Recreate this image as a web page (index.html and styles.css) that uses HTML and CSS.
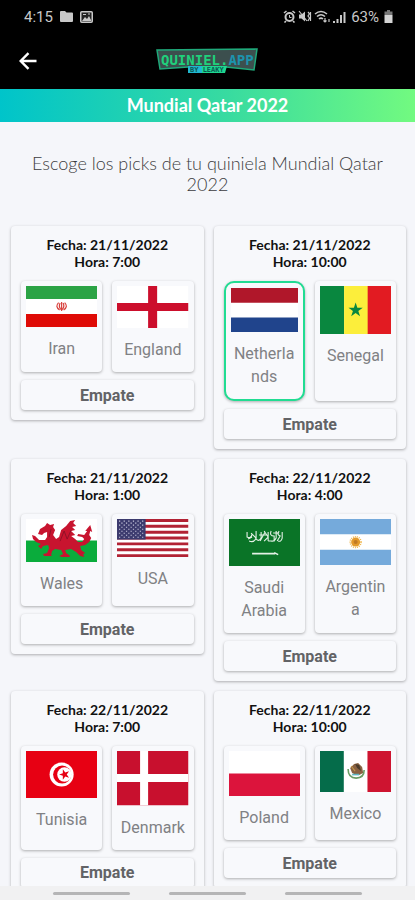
FILE: index.html
```html
<!DOCTYPE html>
<html lang="es">
<head>
<meta charset="utf-8">
<meta name="viewport" content="width=device-width, initial-scale=1">
<title>Mundial Qatar 2022</title>
<link rel="stylesheet" href="styles.css">
</head>
<body>
<div class="app">
  <div class="status">
    <div class="status-group">
      <span>4:15</span>
      <svg width="13" height="11" viewBox="0 0 13 11" fill="#c8c8c8"><path d="M1 0h4l1.500 1.500H12a1 1 0 0 1 1 1V10a1 1 0 0 1-1 1H1a1 1 0 0 1-1-1V1a1 1 0 0 1 1-1z"/></svg>
      <svg width="13" height="12" viewBox="0 0 13 12"><rect x=".75" y=".75" width="11.500" height="10.500" rx="1" fill="#222" stroke="#c8c8c8" stroke-width="1.500"/><path d="M2 10l3-4 2 2 2-3 2.500 5z" fill="#c8c8c8"/><path d="M3 3h3v1H3zM8 2.500h2v1H8z" fill="#c8c8c8"/></svg>
    </div>
    <div class="status-group tight">
      <svg width="13" height="13" viewBox="0 0 13 13" fill="none" stroke="#c8c8c8"><circle cx="6.500" cy="7" r="4" stroke-width="2"/><path d="M1 3l2.500-2M12 3L9.500 1M3 11l-1.500 1.500M10 11l1.500 1.500" stroke-width="1.600"/><path d="M6.500 5v2.500h2"/></svg>
      <svg width="14" height="13" viewBox="0 0 14 13" fill="#c8c8c8"><path d="M1 4.500h2.500L7 1.500v10L3.500 8.500H1z"/><path d="M1 1l8 10M10 2l1.500 1.800L10 6l1.500 2L10 11M12.500 2v9" stroke="#c8c8c8" fill="none" stroke-width="1.200"/></svg>
      <svg width="17" height="13" viewBox="0 0 17 13" fill="none" stroke="#c8c8c8" stroke-width="1.600"><path d="M1 4q6-5 12 0M3 6.500q4-3.500 8 0M5 9q2-1.800 4 0"/><path d="M11 8v4M9.500 10.500L11 12l1.500-1.500M15 12V9" stroke-width="1.200"/></svg>
      <svg width="13" height="12" viewBox="0 0 13 12" fill="#c8c8c8"><path d="M0 10h2v2H0zM3.500 8h2v4h-2zM7 4h2v8H7zM10.500 1h2v11h-2z"/></svg>
      <span class="battery">63%</span>
      <svg width="9" height="13" viewBox="0 0 9 13"><path d="M3 0h3v1.500h2.500V5h-8V1.500H3z" fill="#777"/><path d="M.5 5h8v8h-8z" fill="#d4d4d4"/></svg>
    </div>
  </div>

  <header class="topbar">
    <button class="back" aria-label="Atrás">
      <svg width="18" height="18" viewBox="0 0 18 18" fill="none" stroke="#fff" stroke-width="2.400"><path d="M17.500 9H2M9.500 1.200L1.700 9l7.800 7.800"/></svg>
    </button>
    <svg class="logo" width="102" height="26" viewBox="0 0 102 26" role="img" aria-label="Quiniel.app">
      <path d="M1 2L101 1L98 22L70 19H32L4 21Z" fill="#3c4f4e" stroke="#1fa97a" stroke-width="1.500"/>
      <text x="5" y="17" class="logo-name"><tspan fill="#1fd17c">QUINIEL.</tspan><tspan fill="#1c93ad">APP</tspan></text>
      <path d="M32 18H71L69 25H32Z" fill="#1ed690"/><path d="M32 18H46V25H32Z" fill="#20b7d0"/>
      <text x="34" y="24" class="logo-sub">BY LEAKY</text>
    </svg>
  </header>

  <h1 class="banner">Mundial Qatar 2022</h1>

  <main class="content">
    <p class="intro">Escoge los picks de tu quiniela Mundial Qatar 2022</p>
    <div class="matches">

      <section class="card">
        <h2 class="when">Fecha: 21/11/2022<br>Hora: 7:00</h2>
        <div class="teams">
          <button class="team">
            <svg class="flag" viewBox="0 0 71 41"><path fill="#fff" d="M0 0h71v41H0z"/><path fill="#2ba345" d="M0 0h71v13H0z"/><path fill="#df0b06" d="M0 28h71v13H0z"/><g fill="none" stroke="#d8403c" stroke-width="1.200"><path d="M35.500 16v9M32.500 16.500q-4 4 1 7.500M38.500 16.500q4 4-1 7.500M34 17q-2 4 1.500 7M37 17q2 4-1.500 7"/></g></svg>
            <span class="name">Iran</span>
          </button>
          <button class="team">
            <svg class="flag" viewBox="0 0 71 42"><path fill="#fff" d="M0 0h71v42H0z"/><path fill="#cc0e2c" d="M31 0h9v42h-9zM0 17h71v8H0z"/></svg>
            <span class="name">England</span>
          </button>
        </div>
        <button class="draw">Empate</button>
      </section>

      <section class="card">
        <h2 class="when">Fecha: 21/11/2022<br>Hora: 10:00</h2>
        <div class="teams">
          <button class="team selected" aria-pressed="true">
            <svg class="flag" viewBox="0 0 67 44"><path fill="#fff" d="M0 0h67v44H0z"/><path fill="#b0172a" d="M0 0h67v14.700H0z"/><path fill="#20448c" d="M0 29.300h67V44H0z"/></svg>
            <span class="name">Netherlands</span>
          </button>
          <button class="team">
            <svg class="flag" viewBox="0 0 71 48"><path fill="#09873f" d="M0 0h24v48H0z"/><path fill="#fcee3b" d="M24 0h24v48H24z"/><path fill="#e21b22" d="M47.500 0H71v48H47.500z"/><path fill="#09873f" d="M35.500 16.500l1.700 5.200h5.400l-4.400 3.200 1.700 5.200-4.400-3.200-4.400 3.200 1.700-5.200-4.400-3.200h5.400z"/></svg>
            <span class="name">Senegal</span>
          </button>
        </div>
        <button class="draw">Empate</button>
      </section>

      <section class="card">
        <h2 class="when">Fecha: 21/11/2022<br>Hora: 1:00</h2>
        <div class="teams">
          <button class="team">
            <svg class="flag" viewBox="0 0 71 43"><path fill="#fff" d="M0 0h71v22H0z"/><path fill="#0aac3c" d="M0 21.500h71V43H0z"/>
              <g fill="#c8142f"><path d="M14 10l5-3 2-3 3 2 4-1-1 3 2 3-2 5 3 4 3-2 2-7 5-4 4-5 5-1-2 3 3 3-4 1 3 3-4 1 4 4-4 1 4 3 3 3 4 0 2-3-2-2-5-1 1-2 6 1 3-4-2 0 5-6 2 7-2-1-1 4 2 3-2 4-4 3-5 1 1 4 4 3-2 1 1 3-4-1-4-4-5-3-6 1 1 3 4 3-1 1h-7l-3-1 4-2-2-4-6-1-3 2-1 4 1 1h-8l-1-2 4-1 2-5-1-3-5 1-2 3-3-3 3-2-5-2-3-3-1-4 3 1 4 4 6 0 2-3 0-5-3 1-2 2-4-1z"/></g><path d="M34 22l4-10 3 8 4-9M25 10l-2 8" fill="none" stroke="#831024" stroke-width=".8"/></svg>
            <span class="name">Wales</span>
          </button>
          <button class="team">
            <svg class="flag" viewBox="0 0 71 38"><path fill="#fff" d="M0 0h71v38H0z"/><path stroke="#b22234" stroke-width="2.900" d="M0 1.500h71M0 7.300h71M0 13.200h71M0 19h71M0 24.800h71M0 30.700h71M0 36.500h71"/><path fill="#3c3b6e" d="M0 0h28.500v20.500H0z"/><path stroke="#c9c9de" stroke-width="1.200" stroke-dasharray="1.200 3.400" d="M2 2.200h25M2 6.200h25M2 10.200h25M2 14.200h25M2 18.200h25M4.300 4.200h22M4.300 8.200h22M4.300 12.200h22M4.300 16.200h22"/></svg>
            <span class="name">USA</span>
          </button>
        </div>
        <button class="draw">Empate</button>
      </section>

      <section class="card">
        <h2 class="when">Fecha: 22/11/2022<br>Hora: 4:00</h2>
        <div class="teams">
          <button class="team">
            <svg class="flag" viewBox="0 0 71 47"><path fill="#0a7427" d="M0 0h71v47H0z"/><g fill="none" stroke="#e4f1e6" stroke-width="1.100"><path d="M18 13v5q4 2 5-3M20 22q5 2 7-3l-5-5M27 12v8q3 3 5-1v-6M31 22l5-9M35 12l4 6-4 4M39 13v9M42 12q-2 5 3 5v5h-6M47 12v7q-2 4-5 3M50 12q-3 3 1 5l-3 5M53 13v6q-1 4-4 3M19 20l4-2M30 16h8M44 14h6"/><path stroke-width="1.600" d="M23 34.500h23M45 33.500l4 2"/></g></svg>
            <span class="name">Saudi Arabia</span>
          </button>
          <button class="team">
            <svg class="flag" viewBox="0 0 71 46"><path fill="#fff" d="M0 0h71v46H0z"/><path fill="#75aadb" d="M0 0h71v15.300H0zM0 30.700h71V46H0z"/><circle cx="35.500" cy="23" r="4.500" fill="#e39a2c"/><circle cx="35.500" cy="23" r="5.400" fill="none" stroke="#f0b74e" stroke-width="1.500" stroke-dasharray="1 1"/><circle cx="35.500" cy="23" r="2" fill="#c07a25"/></svg>
            <span class="name">Argentina</span>
          </button>
        </div>
        <button class="draw">Empate</button>
      </section>

      <section class="card">
        <h2 class="when">Fecha: 22/11/2022<br>Hora: 7:00</h2>
        <div class="teams">
          <button class="team">
            <svg class="flag" viewBox="0 0 71 47"><path fill="#e70013" d="M0 0h71v47H0z"/><circle cx="35.500" cy="23.500" r="12" fill="#fff"/><circle cx="36" cy="23.500" r="9" fill="#e70013"/><circle cx="38.300" cy="23.500" r="7.200" fill="#fff"/><path fill="#e70013" d="M33 23.500l3.700-1.200v-4l2.400 3.200 3.800-1.200-2.300 3.200 2.300 3.200-3.800-1.200-2.400 3.200v-4z"/></svg>
            <span class="name">Tunisia</span>
          </button>
          <button class="team">
            <svg class="flag" viewBox="0 0 71 54"><path fill="#c8102e" d="M0 0h71v54H0z"/><path fill="#fff" d="M23 0h8v54h-8zM0 23h71v8H0z"/></svg>
            <span class="name">Denmark</span>
          </button>
        </div>
        <button class="draw">Empate</button>
      </section>

      <section class="card">
        <h2 class="when">Fecha: 22/11/2022<br>Hora: 10:00</h2>
        <div class="teams">
          <button class="team">
            <svg class="flag" viewBox="0 0 71 45"><path fill="#fff" d="M0 0h71v23H0z"/><path fill="#dc143c" d="M0 22.500h71V45H0z"/></svg>
            <span class="name">Poland</span>
          </button>
          <button class="team">
            <svg class="flag" viewBox="0 0 71 41"><path fill="#fff" d="M0 0h71v41H0z"/><path fill="#056c4a" d="M0 0h23.700v41H0z"/><path fill="#ce1430" d="M47.300 0H71v41H47.300z"/><path fill="#8a6242" d="M30 17l4-4 4-1 4 4 1 6-4 2-3 0-4-2z"/><path fill="#4a3a2a" d="M35 13l4 1 2 6-4-3z"/><path fill="none" stroke="#6a9c63" stroke-width="1.600" d="M28 18q0 9 8 9t8-8"/><path stroke="#5fb6c0" stroke-width="1.600" d="M32 23.500h7"/><path stroke="#c79a4a" d="M31 15l4 5"/></svg>
            <span class="name">Mexico</span>
          </button>
        </div>
        <button class="draw">Empate</button>
      </section>

    </div>
  </main>

  <div class="gestures"><i></i><i></i><i></i></div>
</div>
</body>
</html>
```
FILE: styles.css
```css
* { box-sizing: border-box; }

body {
  margin: 0;
  background: #f5f6fa;
  font-family: Roboto, sans-serif;
}

button {
  border: 0;
  margin: 0;
  background: none;
  font: inherit;
  color: inherit;
  cursor: pointer;
}

.app {
  height: 100vh;
  display: flex;
  flex-direction: column;
}

.status {
  display: flex;
  justify-content: space-between;
  align-items: center;
  height: 33px;
  padding: 0 22px 0 24px;
  background: #000;
  color: #c8c8c8;
  font-size: 15px;
}

.status-group {
  display: flex;
  align-items: center;
  gap: 7px;
}

.tight { gap: 2px; }

.battery { margin: 0 3px; }

.topbar {
  display: grid;
  grid-template-columns: 1fr auto 1fr;
  align-items: center;
  height: 56px;
  padding: 0 16px 0 14px;
  background: #000;
}

.back {
  display: flex;
  justify-self: start;
  padding: 5px;
}

.logo-name {
  font: bold 14px "DejaVu Sans Mono", monospace;
}

.logo-sub {
  font: bold 7px "DejaVu Sans Mono", monospace;
  fill: #0a5a50;
}

.banner {
  margin: 0;
  background: linear-gradient(90deg, #00c4ca, #38dba0 55%, #72fa80);
  color: #fff;
  font: bold 18px/33px Lato, sans-serif;
  text-align: center;
}

.content {
  flex: 1;
  min-height: 0;
  overflow: hidden;
}

.intro {
  margin: 0;
  padding: 31px 24px;
  color: #3c3c40;
  font: 300 18px/21px Lato, sans-serif;
  text-align: center;
}

.matches {
  display: grid;
  grid-template-columns: 1fr 1fr;
  align-items: start;
  gap: 10px;
  padding: 0 9px 10px 11px;
}

.card {
  display: flex;
  flex-direction: column;
  padding: 10px;
  border-radius: 4px;
  background: #f7f8fb;
  box-shadow: 0 1px 3px rgba(0, 0, 0, 0.3);
}

.when {
  margin: 0 0 11px;
  color: #111;
  font: bold 14px/17px Lato, sans-serif;
  text-align: center;
}

.teams {
  display: grid;
  grid-template-columns: 1fr 1fr;
  gap: 10px;
  margin-bottom: 8px;
}

.team {
  display: flex;
  flex-direction: column;
  min-width: 0;
  padding: 5px 5px 11px;
  border-radius: 4px;
  background: #f8f9fc;
  box-shadow: 0 1px 3px rgba(0, 0, 0, 0.3);
}

.selected {
  border: 2px solid #21dc92;
  border-radius: 10px;
}

.flag {
  display: block;
  width: 100%;
}

.name {
  width: 100%;
  margin-top: 10px;
  padding: 0 2px;
  color: #808184;
  font-size: 16px;
  line-height: 23px;
  text-align: center;
  overflow-wrap: anywhere;
}

.draw {
  height: 30px;
  padding: 0;
  border-radius: 4px;
  background: #f8f9fc;
  box-shadow: 0 1px 3px rgba(0, 0, 0, 0.3);
  color: #626366;
  font-size: 16px;
  font-weight: 700;
}

.gestures {
  display: flex;
  justify-content: center;
  align-items: center;
  gap: 39px;
  height: 14px;
  background: #f1f1f2;
}

.gestures i {
  width: 77px;
  height: 3px;
  border-radius: 2px;
  background: #b5b5b6;
}
```
